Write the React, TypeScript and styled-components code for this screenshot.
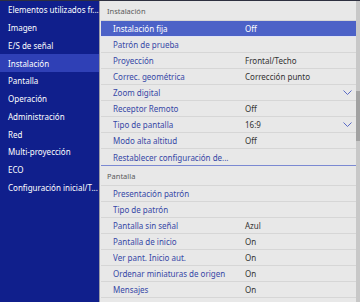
import styled, { createGlobalStyle } from "styled-components";

const GlobalStyle = createGlobalStyle`
  html, body {
    margin: 0;
    padding: 0;
    background: #e8e8e8;
  }
  body {
    font-family: "Noto Sans", "Open Sans", sans-serif;
  }
`;

const Screen = styled.div`
  width: 360px;
  height: 302px;
  display: flex;
  overflow: hidden;
  border-top: 1px solid #2e3040;
  box-sizing: border-box;
`;

const SideNav = styled.nav`
  width: 99px;
  flex-shrink: 0;
  background: #101f8c;
  display: flex;
  flex-direction: column;
`;

const NavItem = styled.div<{ $active?: boolean }>`
  height: 17.75px;
  display: flex;
  align-items: center;
  padding-left: 8px;
  font-size: 8px;
  color: #ffffff;
  white-space: nowrap;
  background: ${(p) => (p.$active ? "#2f40b6" : "transparent")};
`;

const Panel = styled.div`
  flex: 1;
  display: flex;
  background: #e8e8e8;
  border-left: 1px solid #9a9aa6;
`;

const List = styled.div`
  flex: 1;
  display: flex;
  flex-direction: column;
  padding-left: 1px;
`;

const Section = styled.div<{ $divider?: boolean }>`
  display: flex;
  flex-direction: column;
  border-bottom: ${(p) => (p.$divider ? "1px solid #7b89d2" : "none")};
`;

const SectionTitle = styled.div`
  height: 20px;
  display: flex;
  align-items: center;
  padding-left: 6px;
  font-size: 7.5px;
  color: #5a5a5a;
  border-bottom: 1px solid #d6d6d6;
  box-sizing: border-box;
`;

const Row = styled.div<{ $active?: boolean }>`
  height: 16px;
  box-sizing: border-box;
  display: grid;
  grid-template-columns: 132px 1fr 18px;
  align-items: center;
  padding-left: 12px;
  font-size: 8px;
  white-space: nowrap;
  background: ${(p) => (p.$active ? "#4c62c7" : "transparent")};
  border-bottom: 1px solid ${(p) => (p.$active ? "#dfe3f4" : "#d6d6d6")};
  &:last-child {
    border-bottom: none;
  }
`;

const Label = styled.span<{ $active?: boolean }>`
  color: ${(p) => (p.$active ? "#ffffff" : "#3647a6")};
  overflow: hidden;
`;

const Value = styled.span<{ $active?: boolean }>`
  color: ${(p) => (p.$active ? "#ffffff" : "#333333")};
`;

const Chevron = styled.svg`
  width: 9px;
  height: 5px;
  justify-self: center;
`;

const ScrollTrack = styled.div`
  width: 4px;
  flex-shrink: 0;
  background: #c8c8c8;
  position: relative;
`;

const ScrollThumb = styled.div`
  position: absolute;
  left: 0;
  right: 0;
  top: 90px;
  height: 50px;
  background: #a2a2a2;
`;

type Item = { label: string; value?: string; dropdown?: boolean; active?: boolean };

const navItems = [
  "Elementos utilizados fr...",
  "Imagen",
  "E/S de señal",
  "Instalación",
  "Pantalla",
  "Operación",
  "Administración",
  "Red",
  "Multi-proyección",
  "ECO",
  "Configuración inicial/T...",
];

const sections: { title: string; items: Item[] }[] = [
  {
    title: "Instalación",
    items: [
      { label: "Instalación fija", value: "Off", active: true },
      { label: "Patrón de prueba" },
      { label: "Proyección", value: "Frontal/Techo" },
      { label: "Correc. geométrica", value: "Corrección punto" },
      { label: "Zoom digital", dropdown: true },
      { label: "Receptor Remoto", value: "Off" },
      { label: "Tipo de pantalla", value: "16:9", dropdown: true },
      { label: "Modo alta altitud", value: "Off" },
      { label: "Restablecer configuración de..." },
    ],
  },
  {
    title: "Pantalla",
    items: [
      { label: "Presentación patrón" },
      { label: "Tipo de patrón" },
      { label: "Pantalla sin señal", value: "Azul" },
      { label: "Pantalla de inicio", value: "On" },
      { label: "Ver pant. Inicio aut.", value: "On" },
      { label: "Ordenar miniaturas de origen", value: "On" },
      { label: "Mensajes", value: "On" },
      { label: "Rotación del menú", value: "Off" },
    ],
  },
];

export default function App() {
  return (
    <>
      <GlobalStyle />
      <Screen>
        <SideNav>
          {navItems.map((n) => (
            <NavItem key={n} $active={n === "Instalación"}>
              {n}
            </NavItem>
          ))}
        </SideNav>
        <Panel>
          <List>
            {sections.map((s, si) => (
              <Section key={s.title} $divider={si === 0}>
                <SectionTitle>{s.title}</SectionTitle>
                {s.items.map((it) => (
                  <Row key={it.label} $active={it.active}>
                    <Label $active={it.active}>{it.label}</Label>
                    <Value $active={it.active}>{it.value ?? ""}</Value>
                    {it.dropdown ? (
                      <Chevron viewBox="0 0 9 5">
                        <path d="M0.5 0.5 L4.5 4.5 L8.5 0.5" fill="none" stroke="#4a5bc2" strokeWidth="0.9" />
                      </Chevron>
                    ) : (
                      <span />
                    )}
                  </Row>
                ))}
              </Section>
            ))}
          </List>
          <ScrollTrack>
            <ScrollThumb />
          </ScrollTrack>
        </Panel>
      </Screen>
    </>
  );
}
